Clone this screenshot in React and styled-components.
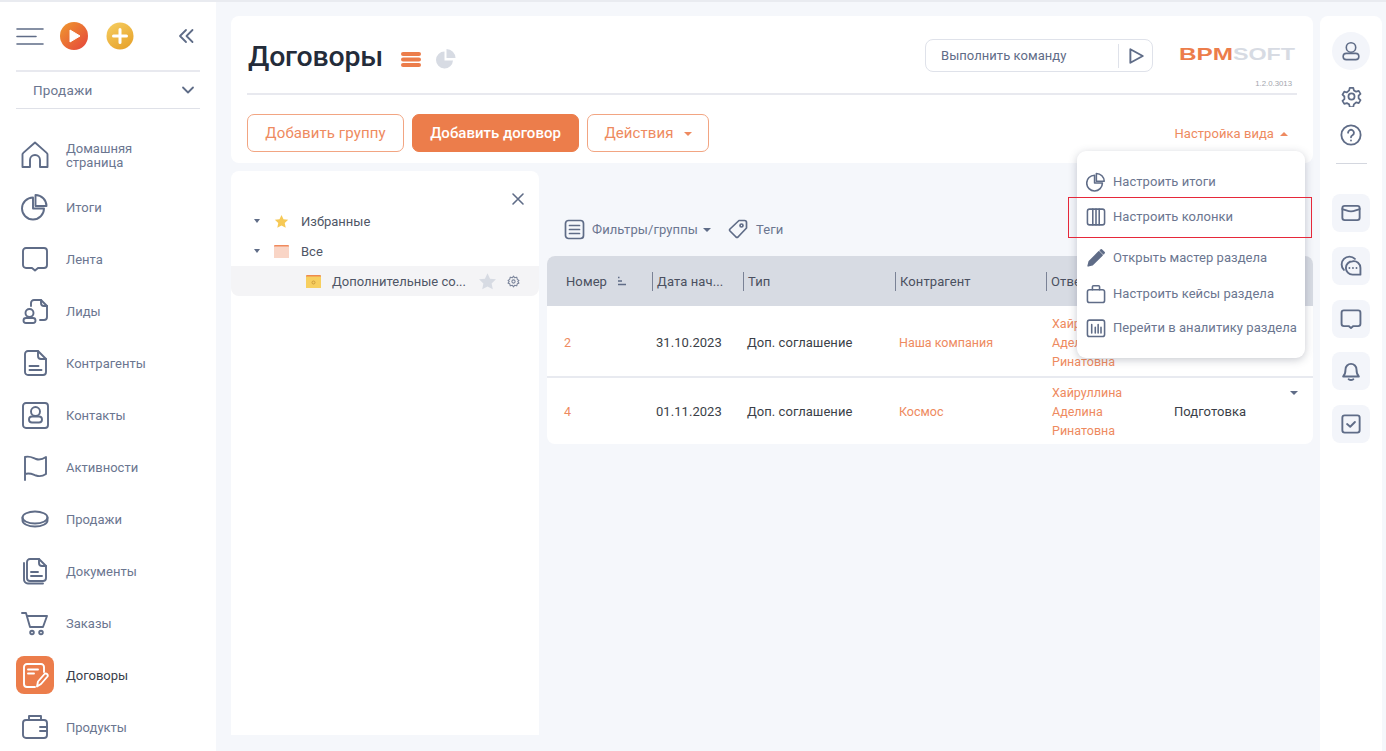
import React from 'react';
import styled, { createGlobalStyle } from 'styled-components';

const GlobalStyle = createGlobalStyle`
  html, body {
    margin: 0;
    padding: 0;
    background: #f5f7fb;
    font-family: Roboto, "Noto Sans", sans-serif;
  }
  * { box-sizing: border-box; }
`;

const Page = styled.div`
  width: 1386px;
  height: 751px;
  overflow: hidden;
  display: flex;
  border-top: 2px solid #e9ebf0;
  background: #f5f7fb;
`;

const Sidebar = styled.aside`
  width: 216px;
  flex-shrink: 0;
  background: #fff;
  padding: 0 16px;
`;

const SideTop = styled.div`
  height: 68px;
  display: flex;
  align-items: center;
  padding-right: 6px;
  gap: 16px;
`;

const PlusWrap = styled.div`
  display: flex;
  margin-left: 2px;
`;

const Collapse = styled.div`
  margin-left: auto;
  display: flex;
`;

const Workplace = styled.div`
  height: 39px;
  border-top: 2px solid #e8e9ef;
  border-bottom: 1px solid #dfe1e8;
  padding: 0 5px 0 17px;
  display: flex;
  align-items: center;
  justify-content: space-between;
  color: #6b7690;
  font-size: 13.5px;
  letter-spacing: 0.2px;
`;

const Nav = styled.nav`
  margin-top: 20px;
`;

const NavItem = styled.div`
  height: 52px;
  display: flex;
  align-items: center;
  gap: 12px;
  color: ${props => (props.$active ? '#3a3f4b' : '#6b7690')};
  font-size: 13px;
  line-height: 14px;
`;

const NavLabel = styled.span`
  white-space: pre-line;
  padding-top: 2px;
`;

const NavIcon = styled.div`
  width: 38px;
  height: 38px;
  flex-shrink: 0;
  display: flex;
  align-items: center;
  justify-content: center;
  border-radius: 8px;
  color: ${props => (props.$active ? '#fff' : '#5f6c87')};
  background: ${props => (props.$active ? '#ec7d4b' : 'transparent')};
`;

const Main = styled.main`
  position: relative;
  width: 1082px;
  margin: 14px 7px 0 15px;
  flex-shrink: 0;
`;

const HeaderCard = styled.section`
  height: 147px;
  background: #fff;
  border-radius: 8px;
  padding: 0 16px;
`;

const HeaderTop = styled.div`
  height: 79px;
  border-bottom: 2px solid #e8e9ef;
  display: flex;
  padding-left: 1px;
`;

const Title = styled.h1`
  margin: 0;
  padding-top: 22px;
  font-size: 28.5px;
  line-height: 38px;
  font-weight: 500;
  color: #242c3a;
  letter-spacing: -0.2px;
`;

const ViewIcons = styled.div`
  display: flex;
  align-items: center;
  gap: 15px;
  height: 38px;
  margin: 24px 0 0 18px;
`;

const CommandBox = styled.div`
  width: 228px;
  height: 33px;
  margin: 23px 0 0 auto;
  border: 1px solid #dfe2ea;
  border-radius: 8px;
  display: flex;
  align-items: center;
  padding-left: 15px;
  color: #5f6c87;
  font-size: 13px;
  letter-spacing: 0.05px;
`;

const CommandRun = styled.div`
  margin-left: auto;
  width: 34px;
  height: 24px;
  border-left: 1px solid #dfe2ea;
  display: flex;
  align-items: center;
  justify-content: center;
`;

const Brand = styled.div`
  width: 118px;
  margin: 29px 0 0 26px;
  display: flex;
  flex-direction: column;
  align-items: flex-end;
`;

const Version = styled.div`
  margin: 16px 5px 0 0;
  font-size: 7.8px;
  line-height: 10px;
  color: #a3a6ae;
  font-family: "Liberation Sans", sans-serif;
`;

const ButtonRow = styled.div`
  height: 38px;
  margin-top: 19px;
  display: flex;
  align-items: center;
  gap: 8px;
`;

const Button = styled.button`
  height: 38px;
  width: ${props => props.$width}px;
  border: 1px solid ${props => (props.$primary ? '#ec7d4b' : '#f2a582')};
  border-radius: 7px;
  background: ${props => (props.$primary ? '#ec7d4b' : '#fff')};
  color: ${props => (props.$primary ? '#fff' : '#ee8a60')};
  font-family: inherit;
  font-size: 15px;
  font-weight: ${props => (props.$primary ? 500 : 400)};
  letter-spacing: ${props => (props.$primary ? 0 : 0.1)}px;
  padding: 0;
`;

const Caret = styled.span`
  display: inline-block;
  width: 0;
  height: 0;
  border-left: 4px solid transparent;
  border-right: 4px solid transparent;
  border-top: ${props => (props.$up ? '0' : `4px solid ${props.$color}`)};
  border-bottom: ${props => (props.$up ? `4px solid ${props.$color}` : '0')};
  vertical-align: middle;
  margin-left: ${props => props.$gap ?? 10}px;
`;

const ViewSettings = styled.div`
  margin: 0 9px 0 auto;
  color: #ee8a60;
  font-size: 13px;
  letter-spacing: 0.05px;
`;

const Workspace = styled.div`
  display: flex;
  gap: 8px;
  margin-top: 8px;
`;

const TreePanel = styled.section`
  width: 308px;
  height: 564px;
  background: #fff;
  border-radius: 8px 8px 0 0;
`;

const TreeClose = styled.div`
  height: 35px;
  display: flex;
  justify-content: flex-end;
  align-items: flex-end;
  padding-right: 14px;
  color: #5f6c87;
`;

const TreeRow = styled.div`
  height: 30px;
  display: flex;
  align-items: center;
  padding-left: ${props => props.$indent}px;
  background: ${props => (props.$selected ? '#f4f4f6' : 'transparent')};
  border-radius: ${props => (props.$selected ? '0 0 8px 8px' : '0')};
  color: #4f5666;
  font-size: 13px;
`;

const TreeCaret = styled.span`
  width: 0;
  height: 0;
  border-left: 3.5px solid transparent;
  border-right: 3.5px solid transparent;
  border-top: 4px solid #5f6c87;
  margin-right: 14px;
`;

const TreeIcon = styled.span`
  width: 15px;
  display: flex;
  margin-right: ${props => props.$after ?? 12}px;
`;

const TreeActions = styled.span`
  margin-left: 12px;
  display: flex;
  align-items: center;
  gap: 10px;
`;

const Content = styled.section`
  width: 766px;
`;

const Toolbar = styled.div`
  height: 85px;
  padding: 48px 0 0 17px;
  display: flex;
  align-items: flex-start;
  color: #6b7690;
  font-size: 13px;
  letter-spacing: 0.1px;
`;

const ToolItem = styled.div`
  height: 20px;
  display: flex;
  align-items: center;
  gap: ${props => props.$gap}px;
  margin-right: ${props => props.$after ?? 0}px;
`;

const Table = styled.div`
  background: #fff;
  border-radius: 8px;
  overflow: hidden;
`;

const columns = '106px 91px 152px 151px 123px 1fr';

const HeadRow = styled.div`
  height: 50px;
  display: grid;
  grid-template-columns: ${columns};
  align-items: center;
  background: #d7dbe3;
  color: #4a5060;
  font-size: 13px;
  letter-spacing: 0.1px;
`;

const HeadCell = styled.div`
  height: 19px;
  line-height: 19px;
  white-space: nowrap;
  display: flex;
  align-items: center;
  gap: 10px;
  margin-left: ${props => (props.$first ? 0 : -1)}px;
  padding-left: ${props => (props.$first ? 19 : 4)}px;
  border-left: ${props => (props.$first ? '0' : '1px solid #7a8296')};
`;

const BodyRow = styled.div`
  position: relative;
  height: ${props => props.$height}px;
  padding-top: ${props => (props.$line ? 2 : 0)}px;
  display: grid;
  grid-template-columns: ${columns};
  align-items: center;
  color: #3b3f48;
  font-size: 13px;
  letter-spacing: 0.05px;
  border-bottom: ${props => (props.$line ? '2px solid #e8eaf0' : '0')};
`;

const BodyCell = styled.div`
  padding-left: ${props => props.$pad ?? 3}px;
  line-height: 19px;
  color: ${props => (props.$link ? '#ee8a60' : 'inherit')};
  font-size: ${props => (props.$link ? 12.5 : 13)}px;
  letter-spacing: ${props => (props.$link ? 0 : 0.05)}px;
`;

const RowCaret = styled.span`
  position: absolute;
  right: 15px;
  top: 13px;
  width: 0;
  height: 0;
  border-left: 4px solid transparent;
  border-right: 4px solid transparent;
  border-top: 4px solid #5f6c87;
`;

const Menu = styled.div`
  position: absolute;
  left: 846px;
  top: 135px;
  width: 228px;
  height: 207px;
  padding-top: 13px;
  background: #fff;
  border-radius: 9px;
  box-shadow: 0 2px 8px rgba(60, 70, 90, 0.28);
`;

const MenuItem = styled.div`
  height: 35px;
  margin-top: ${props => props.$top ?? 0}px;
  padding-left: 9px;
  display: flex;
  align-items: center;
  gap: 7px;
  color: #6b7690;
  font-size: 13px;
  letter-spacing: 0.05px;
  white-space: nowrap;
`;

const Highlight = styled.div`
  position: absolute;
  left: 837px;
  top: 181px;
  width: 244px;
  height: 41px;
  border: 1px solid #e6283a;
  pointer-events: none;
`;

const Rail = styled.aside`
  width: 62px;
  margin-top: 14px;
  flex-shrink: 0;
  background: #fff;
  border-radius: 8px 8px 0 0;
  padding-top: 16px;
  display: flex;
  flex-direction: column;
  align-items: center;
`;

const Avatar = styled.div`
  width: 38px;
  height: 38px;
  border-radius: 50%;
  background: #f3f5fa;
  display: flex;
  align-items: center;
  justify-content: center;
`;

const RailIcon = styled.div`
  height: 22px;
  margin-top: ${props => props.$top}px;
  display: flex;
  align-items: center;
`;

const RailDivider = styled.div`
  width: 31px;
  height: 1px;
  margin: 17px 0 30px;
  background: #d4d7df;
`;

const RailButton = styled.div`
  width: 38px;
  height: 38px;
  margin-bottom: 14.75px;
  border-radius: 8px;
  background: #f3f5fa;
  display: flex;
  align-items: center;
  justify-content: center;
`;

const Icon = ({ size = 28, box = 28, color = 'currentColor', width = 1.9, children }) => (
  <svg
    width={size}
    height={size}
    viewBox={`0 0 ${box} ${box}`}
    fill="none"
    stroke={color}
    strokeWidth={width}
    strokeLinecap="round"
    strokeLinejoin="round"
  >
    {children}
  </svg>
);

const slate = '#5f6c87';

const pieShape = (
  <>
    <path d="M12 4.500a11 11 0 1 0 11 11H12z" />
    <path d="M14.500 2a11 11 0 0 1 11 11h-11z" />
  </>
);

const navItems = [
  {
    label: 'Домашняя\nстраница',
    icon: <path d="M1.500 26V13.500a2 2 0 0 1 .8-1.600L14 1.500l11.700 10.400a2 2 0 0 1 .8 1.600V26H19v-7a5 5 0 0 0-10 0v7z" />,
  },
  { label: 'Итоги', icon: pieShape },
  {
    label: 'Лента',
    icon: <path d="M5 3h18a3 3 0 0 1 3 3v14a3 3 0 0 1-3 3h-6l-3 2.500-3-2.500H5a3 3 0 0 1-3-3V6a3 3 0 0 1 3-3z" />,
  },
  {
    label: 'Лиды',
    icon: (
      <>
        <path d="M10 9V6a3 3 0 0 1 3-3h7l6 6v11a3 3 0 0 1-3 3h-4" />
        <path d="M20 3v3a3 3 0 0 0 3 3h3" />
        <circle cx="8.500" cy="16" r="4" />
        <rect x="2.500" y="21" width="12" height="5" rx="2.500" />
      </>
    ),
  },
  {
    label: 'Контрагенты',
    icon: (
      <>
        <path d="M7 2h10l8 8v13a3 3 0 0 1-3 3H7a3 3 0 0 1-3-3V5a3 3 0 0 1 3-3z" />
        <path d="M17 2v5a3 3 0 0 0 3 3h5" />
        <path d="M8.500 17h9M8.500 21h12" />
      </>
    ),
  },
  {
    label: 'Контакты',
    icon: (
      <>
        <rect x="2" y="2" width="25" height="25" rx="3" />
        <circle cx="14.500" cy="10.500" r="4.500" />
        <rect x="8" y="15.500" width="13" height="6" rx="3" />
      </>
    ),
  },
  {
    label: 'Активности',
    icon: <path d="M4 27V4c5-1.500 8 1 11 2s7 0 10-2v17c-3 2-7 2.500-10 1.500s-6-3-11-1.500" />,
  },
  {
    label: 'Продажи',
    icon: (
      <>
        <ellipse cx="14" cy="12.500" rx="12.500" ry="6" />
        <path d="M1.500 12.500v3c0 3.300 5.600 6 12.500 6s12.500-2.700 12.500-6v-3" />
      </>
    ),
  },
  {
    label: 'Документы',
    icon: (
      <>
        <path d="M9 2h9l7 7v12a3 3 0 0 1-3 3H9a3 3 0 0 1-3-3V5a3 3 0 0 1 3-3z" />
        <path d="M18 2v4a3 3 0 0 0 3 3h4" />
        <path d="M3 6v16a4 4 0 0 0 4 4.500h15" />
        <path d="M10 15h7M10 19h11" />
      </>
    ),
  },
  {
    label: 'Заказы',
    icon: (
      <>
        <path d="M1 4h4l4 14h13l4-11H6.500" />
        <circle cx="11" cy="23.500" r="1.800" />
        <circle cx="20" cy="23.500" r="1.800" />
      </>
    ),
  },
  {
    label: 'Договоры',
    active: true,
    icon: (
      <>
        <path d="M23 11V6a3 3 0 0 0-3-3H6a3 3 0 0 0-3 3v17a3 3 0 0 0 3 3h8" />
        <path d="M7 8.500h10M7 12.500h6" />
        <path d="M16 25.500l1-5 6.500-7.500a2 2 0 0 1 3 2.500L20 23z" />
      </>
    ),
  },
  {
    label: 'Продукты',
    icon: (
      <>
        <rect x="2" y="7" width="24" height="18" rx="3" />
        <path d="M8 7V3h12v4" />
        <path d="M26 14h-7M26 18h-7" />
      </>
    ),
  },
];

const menuItems = [
  { label: 'Настроить итоги', icon: pieShape },
  {
    label: 'Настроить колонки',
    icon: (
      <>
        <rect x="2" y="3" width="24" height="22" rx="3" />
        <path d="M9.500 3v22M14 3v22M18.500 3v22" />
      </>
    ),
  },
  {
    label: 'Открыть мастер раздела',
    top: 6,
    icon: (
      <>
        <path d="M3 25l1.500-6L18 5.500l4.500 4.500L9 23.500z" fill={slate} />
        <path d="M20 3.500l1.500-1 4 4-1 1.500z" fill={slate} />
      </>
    ),
  },
  {
    label: 'Настроить кейсы раздела',
    top: 1,
    icon: (
      <>
        <rect x="2" y="8" width="24" height="18" rx="3" />
        <path d="M9 8V4a1.500 1.500 0 0 1 1.500-1.500h7A1.500 1.500 0 0 1 19 4v4" />
      </>
    ),
  },
  {
    label: 'Перейти в аналитику раздела',
    top: -1,
    icon: (
      <>
        <rect x="2" y="3" width="24" height="23" rx="3" />
        <path d="M8 9v12M13 13v8M17 9v12M21 13v8" />
      </>
    ),
  },
];

const railButtons = [
  <>
    <rect x="3" y="5" width="22" height="18" rx="3" />
    <path d="M3 9c4 1 7 3 11 3s7-2 11-3" />
  </>,
  <>
    <path d="M5 19a9.500 9.500 0 0 1 14-14" />
    <path d="M16 8a8.500 8.500 0 0 1 10 8.500V25H16a8.500 8.500 0 0 1 0-17z" />
    <path d="M12 16.500h.01M16.500 16.500h.01M21 16.500h.01" />
  </>,
  <path d="M5 3h18a3 3 0 0 1 3 3v14a3 3 0 0 1-3 3h-6l-3 2.500-3-2.500H5a3 3 0 0 1-3-3V6a3 3 0 0 1 3-3z" />,
  <>
    <path d="M4 21c2-2 3-4 3-9a7 7 0 0 1 14 0c0 5 1 7 3 9z" />
    <path d="M11 24.500c1.500 1 4.500 1 6 0" />
  </>,
  <>
    <rect x="3" y="3" width="22" height="22" rx="3" />
    <path d="M9 14l4 3.500 6-6" />
  </>,
];

const person = (
  <>
    <circle cx="14" cy="9.500" r="6" />
    <rect x="4" y="17" width="20" height="8" rx="4" />
  </>
);

const PlayBadge = () => (
  <svg width="28" height="28" viewBox="0 0 28 28">
    <defs>
      <linearGradient id="playFill" x1="0" y1="0" x2="1" y2="1">
        <stop offset="0" stopColor="#ef9a2e" />
        <stop offset="1" stopColor="#e5433c" />
      </linearGradient>
    </defs>
    <circle cx="14" cy="14" r="14" fill="url(#playFill)" />
    <path d="M10 8l10 6-10 6z" fill="#fff" stroke="#fff" strokeLinejoin="round" />
  </svg>
);

const PlusBadge = () => (
  <svg width="28" height="28" viewBox="0 0 28 28">
    <defs>
      <linearGradient id="plusFill" x1="0" y1="0" x2="0.6" y2="1">
        <stop offset="0" stopColor="#f6cf62" />
        <stop offset="1" stopColor="#e8a52f" />
      </linearGradient>
    </defs>
    <circle cx="14" cy="14" r="13.500" fill="url(#plusFill)" />
    <path d="M14 7.500v13M7.500 14h13" stroke="#fff" strokeWidth="3" strokeLinecap="round" />
  </svg>
);

const Logo = () => (
  <svg width="118" height="18" viewBox="0 0 118 18">
    <text
      x="0"
      y="15"
      textLength="54"
      lengthAdjust="spacingAndGlyphs"
      fontFamily="Liberation Sans, sans-serif"
      fontSize="16.500"
      fontWeight="700"
      fill="#ec7d4b"
    >
      BPM
    </text>
    <text
      x="54"
      y="15"
      textLength="62"
      lengthAdjust="spacingAndGlyphs"
      fontFamily="Liberation Sans, sans-serif"
      fontSize="16.500"
      fontWeight="700"
      fill="#d7dbe3"
    >
      SOFT
    </text>
  </svg>
);

const Star = ({ color, size }) => (
  <svg width={size} height={size} viewBox="0 0 24 24">
    <path d="M12 1.500l3.200 6.900 7.500.9-5.500 5.100 1.500 7.500L12 18.200l-6.700 3.700 1.500-7.500L1.300 9.300l7.500-.9z" fill={color} />
  </svg>
);

const Folder = ({ back, front, mark }) => (
  <svg width="15" height="13" viewBox="0 0 15 13">
    <rect x="0" y="0" width="15" height="13" rx="1" fill={back} />
    <rect x="0" y="1.500" width="15" height="11.500" fill={front} />
    {mark && <circle cx="7.500" cy="7.500" r="1.500" fill="none" stroke={mark} strokeWidth="0.9" />}
  </svg>
);

const App = () => (
  <>
    <GlobalStyle />
    <Page>
      <Sidebar>
        <SideTop>
          <Icon size={28} color={slate} width={1.6}>
            <path d="M1 7h26M1 14.500h19M1 22h26" />
          </Icon>
          <PlayBadge />
          <PlusWrap>
            <PlusBadge />
          </PlusWrap>
          <Collapse>
            <Icon size={16} box={16} color={slate} width={1.8}>
              <path d="M8 2L2 8l6 6M14.500 2l-6 6 6 6" />
            </Icon>
          </Collapse>
        </SideTop>
        <Workplace>
          Продажи
          <Icon size={14} box={14} color={slate} width={1.8}>
            <path d="M2 4.500l5 5 5-5" />
          </Icon>
        </Workplace>
        <Nav>
          {navItems.map(item => (
            <NavItem key={item.label} $active={item.active}>
              <NavIcon $active={item.active}>
                <Icon>{item.icon}</Icon>
              </NavIcon>
              <NavLabel>{item.label}</NavLabel>
            </NavItem>
          ))}
        </Nav>
      </Sidebar>

      <Main>
        <HeaderCard>
          <HeaderTop>
            <Title>Договоры</Title>
            <ViewIcons>
              <svg width="20" height="15" viewBox="0 0 20 15" fill="#ec7d4b">
                <rect width="20" height="4" rx="2" />
                <rect y="5.500" width="20" height="4" rx="2" />
                <rect y="11" width="20" height="4" rx="2" />
              </svg>
              <svg width="20" height="20" viewBox="0 0 20 20" fill="#d7dbe3">
                <path d="M8.500 2.500a8.500 8.500 0 1 0 8.500 9h-8.500z" />
                <path d="M10.500 0a9 9 0 0 1 9 9h-9z" />
              </svg>
            </ViewIcons>
            <CommandBox>
              Выполнить команду
              <CommandRun>
                <Icon size={18} box={16} color={slate} width={1.7}>
                  <path d="M3 2l11 6-11 6z" />
                </Icon>
              </CommandRun>
            </CommandBox>
            <Brand>
              <Logo />
              <Version>1.2.0.3013</Version>
            </Brand>
          </HeaderTop>
          <ButtonRow>
            <Button $width={157}>Добавить группу</Button>
            <Button $width={167} $primary>Добавить договор</Button>
            <Button $width={122}>
              Действия
              <Caret $color="#ee8a60" />
            </Button>
            <ViewSettings>
              Настройка вида
              <Caret $up $color="#ee8a60" $gap={6} />
            </ViewSettings>
          </ButtonRow>
        </HeaderCard>

        <Workspace>
          <TreePanel>
            <TreeClose>
              <Icon size={14} box={14} width={1.6}>
                <path d="M2 2l10 10M12 2L2 12" />
              </Icon>
            </TreeClose>
            <TreeRow $indent={23}>
              <TreeCaret />
              <TreeIcon><Star color="#f6c956" size={15} /></TreeIcon>
              Избранные
            </TreeRow>
            <TreeRow $indent={23}>
              <TreeCaret />
              <TreeIcon><Folder back="#f08a5d" front="#f9d5c6" /></TreeIcon>
              Все
            </TreeRow>
            <TreeRow $indent={75} $selected>
              <TreeIcon $after={11}><Folder back="#ee8a4d" front="#f7cf5f" mark="#c9973a" /></TreeIcon>
              Дополнительные со...
              <TreeActions>
                <Star color="#d7dbe3" size={19} />
                <Icon size={13} box={24} color="#7c869c" width={2}>
                  <circle cx="12" cy="12" r="3" />
                  <path d="M12 2l2 3 4-1 1 4 3 2-2 2 2 3-3 1-1 4-4-1-2 3-2-3-4 1-1-4-3-1 2-3-2-2 3-2 1-4 4 1z" />
                </Icon>
              </TreeActions>
            </TreeRow>
          </TreePanel>

          <Content>
            <Toolbar>
              <ToolItem $gap={7} $after={17}>
                <Icon size={21} box={21} color={slate} width={1.7}>
                  <rect x="1.500" y="1.500" width="18" height="18" rx="3" />
                  <path d="M5.500 6.500h10M5.500 10.500h10M5.500 14.500h10" />
                </Icon>
                <span>
                  Фильтры/группы
                  <Caret $color={slate} $gap={5} />
                </span>
              </ToolItem>
              <ToolItem $gap={8}>
                <Icon size={20} box={20} color={slate} width={1.7}>
                  <path d="M11 1.500h5.500a2 2 0 0 1 2 2V9L10 18a1.500 1.500 0 0 1-2 0l-6-6a1.500 1.500 0 0 1 0-2z" />
                  <circle cx="13.500" cy="6.500" r="1.500" />
                </Icon>
                Теги
              </ToolItem>
            </Toolbar>
            <Table>
              <HeadRow>
                <HeadCell $first>
                  Номер
                  <svg width="9" height="10" viewBox="0 0 9 10" stroke={slate} strokeWidth="1.300">
                    <path d="M1 1.500h1.500M1 5h4M1 8.500h8" />
                  </svg>
                </HeadCell>
                <HeadCell>Дата нач...</HeadCell>
                <HeadCell>Тип</HeadCell>
                <HeadCell>Контрагент</HeadCell>
                <HeadCell>Ответственный</HeadCell>
                <HeadCell>Статус</HeadCell>
              </HeadRow>
              <BodyRow $height={72} $line>
                <BodyCell $pad={17} $link>2</BodyCell>
                <BodyCell>31.10.2023</BodyCell>
                <BodyCell>Доп. соглашение</BodyCell>
                <BodyCell $link>Наша компания</BodyCell>
                <BodyCell $pad={5} $link>Хайруллина<br />Аделина<br />Ринатовна</BodyCell>
                <BodyCell $pad={4} />
              </BodyRow>
              <BodyRow $height={66}>
                <BodyCell $pad={17} $link>4</BodyCell>
                <BodyCell>01.11.2023</BodyCell>
                <BodyCell>Доп. соглашение</BodyCell>
                <BodyCell $link>Космос</BodyCell>
                <BodyCell $pad={5} $link>Хайруллина<br />Аделина<br />Ринатовна</BodyCell>
                <BodyCell $pad={4}>Подготовка</BodyCell>
                <RowCaret />
              </BodyRow>
            </Table>
          </Content>
        </Workspace>

        <Menu>
          {menuItems.map(item => (
            <MenuItem key={item.label} $top={item.top}>
              <Icon size={20} color={slate} width={2.2}>{item.icon}</Icon>
              {item.label}
            </MenuItem>
          ))}
        </Menu>
        <Highlight />
      </Main>

      <Rail>
        <Avatar>
          <Icon size={22} color={slate} width={2}>{person}</Icon>
        </Avatar>
        <RailIcon $top={15}>
          <Icon size={21} box={24} color={slate} width={2}>
            <circle cx="12" cy="12" r="3.500" />
            <path d="M10 2h4l.7 3 2.600 1.500 3-.9 2 3.400-2.200 2.100v3l2.200 2.100-2 3.400-3-.9L14.700 21l-.7 3h-4l-.7-3-2.600-1.500-3 .9-2-3.400L3.900 15v-3L1.700 9.900l2-3.400 3 .9L9.300 5z" />
          </Icon>
        </RailIcon>
        <RailIcon $top={17}>
          <Icon size={22} box={24} color={slate} width={2}>
            <circle cx="12" cy="12" r="10.500" />
            <path d="M8.800 9.500a3.200 3.200 0 1 1 4.800 2.800c-1 .6-1.600 1.200-1.600 2.200" />
            <path d="M12 18h.01" />
          </Icon>
        </RailIcon>
        <RailDivider />
        {railButtons.map((icon, index) => (
          <RailButton key={index}>
            <Icon size={22} color={slate} width={2.4}>{icon}</Icon>
          </RailButton>
        ))}
      </Rail>
    </Page>
  </>
);

export default App;
